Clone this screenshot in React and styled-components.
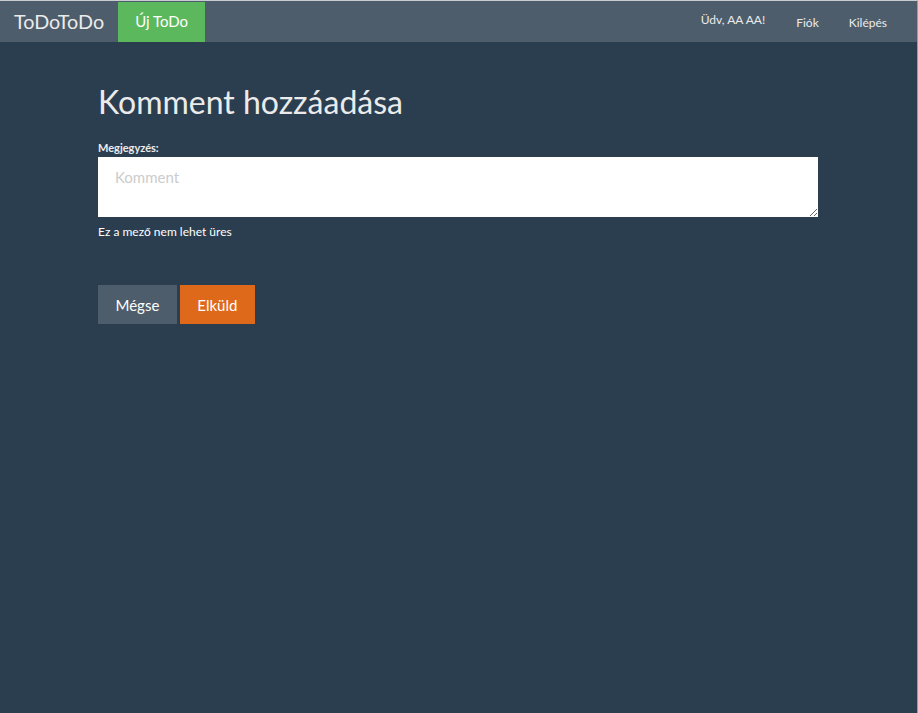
import React from "react";
import styled, { createGlobalStyle } from "styled-components";

const Global = createGlobalStyle`
  html, body { margin: 0; padding: 0; }
  body {
    background: #2b3e50;
    font-family: Lato, "Open Sans", sans-serif;
    font-size: 15px;
    color: #ebebeb;
    min-height: 713px;
    box-sizing: border-box;
    border-top: 1px solid #c8cbcf;
    border-right: 1px solid #6aa9e0;
  }
  * { box-sizing: border-box; }
`;

const Navbar = styled.nav`
  height: 41px;
  background: #4e5d6c;
  display: flex;
  align-items: stretch;
  padding: 0 15px 0 0;
`;

const Brand = styled.a`
  display: flex;
  align-items: center;
  padding: 0 14px 2px 14px;
  font-size: 19.8px;
  color: #ebebeb;
  text-decoration: none;
`;

const NewTodo = styled.a`
  display: flex;
  align-items: center;
  justify-content: center;
  width: 87px;
  margin-top: 1px;
  padding-bottom: 3px;
  background: #5cb85c;
  color: #fff;
  font-size: 15px;
  text-decoration: none;
`;

const NavRight = styled.div`
  margin-left: auto;
  display: flex;
  align-items: center;
  font-size: 12px;
`;

const NavText = styled.span`
  color: #ebebeb;
  margin-right: 16px;
  margin-top: -4px;
`;

const NavLink = styled.a`
  color: #ebebeb;
  text-decoration: none;
  padding: 0 15px;
  margin-top: 2px;
`;

const Main = styled.div`
  padding-right: 1px;
`;

const Container = styled.main`
  width: 720px;
  margin: 0 auto;
  padding-top: 42px;
`;

const Title = styled.h1`
  margin: 0 0 22px;
  font-size: 32px;
  font-weight: 400;
  line-height: 1.1;
  color: #ebebeb;
`;

const Label = styled.label`
  display: block;
  font-size: 11px;
  font-weight: 700;
  margin-bottom: 3px;
`;

const TextArea = styled.textarea`
  display: block;
  width: 100%;
  height: 60px;
  border: none;
  padding: 11px 17px 9px;
  font-family: Lato, sans-serif;
  font-size: 15px;
  color: #2b3e50;
  background: #fff;
  &::placeholder { color: #cccccc; }
`;

const Help = styled.div`
  font-size: 12px;
  margin-top: 7px;
  color: #ffffff;
`;

const Actions = styled.div`
  display: flex;
  gap: 3px;
  margin-top: 46px;
`;

const Button = styled.button`
  height: 39px;
  padding: 0 17.5px;
  border: none;
  font-family: Lato, sans-serif;
  font-size: 15px;
  color: #fff;
  background: ${(p) => (p.$variant === "warning" ? "#df691a" : "#4e5d6c")};
  cursor: pointer;
`;

export default function App() {
  return (
    <>
      <Global />
      <Navbar>
        <Brand href="#">ToDoToDo</Brand>
        <NewTodo href="#">Új ToDo</NewTodo>
        <NavRight>
          <NavText>Üdv, AA AA!</NavText>
          <NavLink href="#">Fiók</NavLink>
          <NavLink href="#">Kilépés</NavLink>
        </NavRight>
      </Navbar>
      <Main>
        <Container>
          <Title>Komment hozzáadása</Title>
          <Label>Megjegyzés:</Label>
          <TextArea placeholder="Komment" />
          <Help>Ez a mező nem lehet üres</Help>
          <Actions>
            <Button>Mégse</Button>
            <Button $variant="warning">Elküld</Button>
          </Actions>
        </Container>
      </Main>
    </>
  );
}
